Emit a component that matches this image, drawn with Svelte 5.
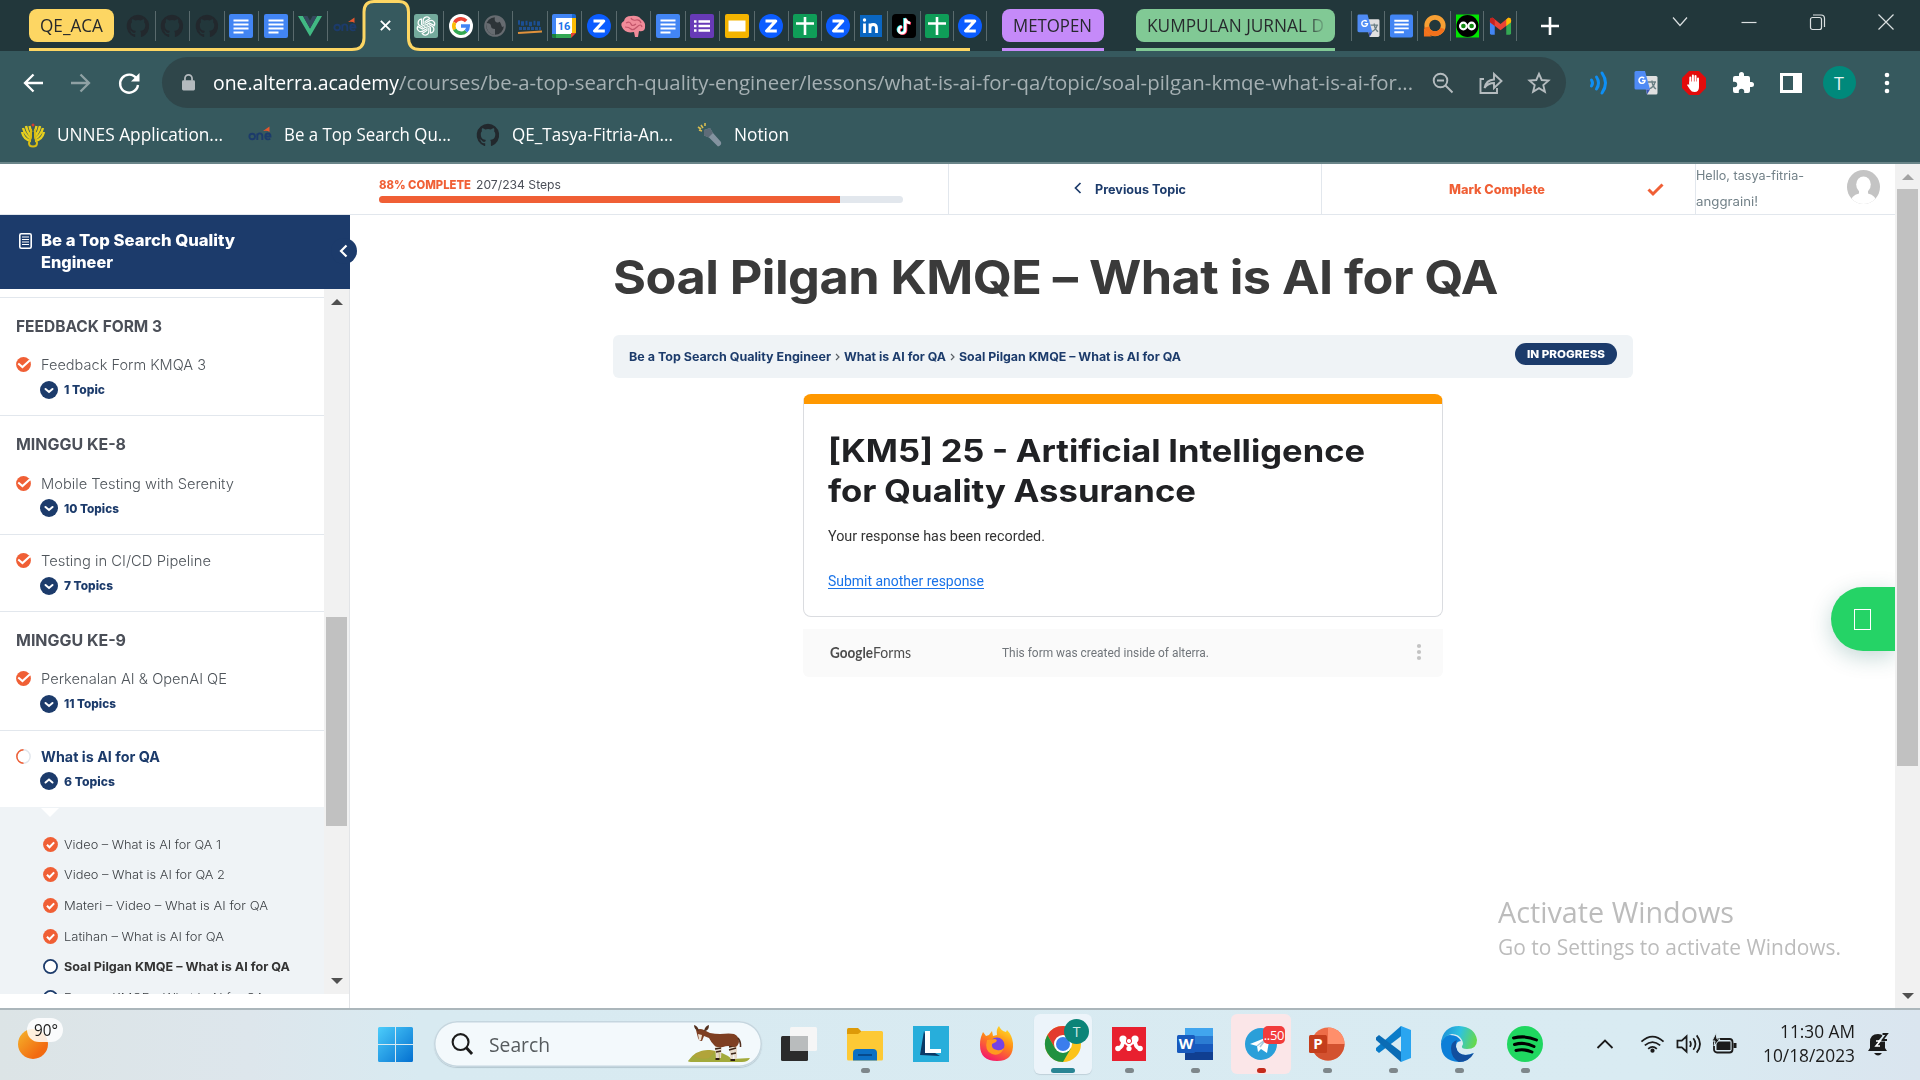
<script>
  // Scales a text run horizontally so that it takes exactly `w` pixels.
  function fit(el, w) {
    const natural = el.getBoundingClientRect().width;
    if (!natural) return;
    el.style.transform = `scaleX(${w / natural})`;
    el.style.marginRight = `${w - natural}px`;
  }

  const groupA = [
    ['github', 34.5], ['github', 34.5], ['github', 34.5], ['docs', 34.5], ['docs', 34.5], ['vue', 34.5], ['one', 34.5],
    ['active', 47],
    ['gpt', 34.5], ['google', 34.5], ['globe', 34.5], ['merdeka', 34.5], ['calendar', 34.5], ['zoom', 34.5], ['brain', 34.5],
    ['docs', 34.5], ['forms', 34.5], ['slides', 34.5], ['zoom', 34.5], ['sheets', 33], ['zoom', 33], ['linkedin', 33],
    ['tiktok', 33], ['sheets', 33], ['zoom', 33]
  ];
  const groupB = ['translate', 'docs', 'ring', 'infinity', 'gmail'];
  const extensions = ['waves', 'translate', 'hand', 'puzzle', 'panel', 'avatar', 'kebab'];
  const bookmarks = [
    { icon: 'unnes', text: 'UNNES Application...', w: 166 },
    { icon: 'one', text: 'Be a Top Search Qu...', w: 167 },
    { icon: 'github', text: 'QE_Tasya-Fitria-An...', w: 161 },
    { icon: 'torch', text: 'Notion', w: 55 }
  ];
  const sections = [
    { title: 'FEEDBACK FORM 3', w: 146, items: [{ name: 'Feedback Form KMQA 3', w: 165, topics: '1 Topic', tw: 41 }] },
    {
      title: 'MINGGU KE-8', w: 110,
      items: [
        { name: 'Mobile Testing with Serenity', w: 193, topics: '10 Topics', tw: 55 },
        { name: 'Testing in CI/CD Pipeline', w: 170, topics: '7 Topics', tw: 49 }
      ]
    },
    {
      title: 'MINGGU KE-9', w: 110,
      items: [
        { name: 'Perkenalan AI & OpenAI QE', w: 186, topics: '11 Topics', tw: 52 },
        { name: 'What is AI for QA', w: 119, topics: '6 Topics', tw: 51, open: true }
      ]
    }
  ];
  const lessons = [
    { name: 'Video – What is AI for QA 1', w: 157, done: true },
    { name: 'Video – What is AI for QA 2', w: 161, done: true },
    { name: 'Materi – Video – What is AI for QA', w: 204, done: true },
    { name: 'Latihan – What is AI for QA', w: 160, done: true },
    { name: 'Soal Pilgan KMQE – What is AI for QA', w: 226, current: true },
    { name: 'Essay – KMQE – What is AI for QA', w: 200 }
  ];
  const apps = ['taskview', 'explorer', 'lapp', 'firefox', 'chrome', 'mendeley', 'word', 'telegram', 'powerpoint', 'vscode', 'edge', 'spotify'];
  const running = ['explorer', 'mendeley', 'word', 'powerpoint', 'vscode', 'edge', 'spotify'];
</script>

{#snippet icon(name)}
  <svg class="ic" viewBox="0 0 24 24">
    {#if name === 'github'}
      <path fill="#22282d" d="M12 .8a11.4 11.4 0 0 0-3.6 22.2c.6.1.8-.3.8-.6v-2.200c-3.200.7-3.900-1.400-3.900-1.400-.5-1.300-1.300-1.700-1.300-1.700-1-.7.1-.7.1-.7 1.200.1 1.800 1.200 1.800 1.200 1 1.800 2.700 1.300 3.400 1 .1-.8.4-1.300.7-1.600-2.500-.3-5.200-1.300-5.200-5.700 0-1.200.4-2.300 1.200-3-.1-.3-.5-1.500.1-3.100 0 0 1-.3 3.100 1.200a10.700 10.700 0 0 1 5.700 0c2.200-1.500 3.100-1.200 3.100-1.200.6 1.600.2 2.800.1 3.100.7.8 1.200 1.800 1.200 3 0 4.400-2.700 5.400-5.200 5.700.4.3.8 1 .8 2.100v3.200c0 .3.200.7.8.6A11.400 11.400 0 0 0 12 .8z" />
    {:else if name === 'docs'}
      <rect width="24" height="24" rx="2" fill="#4285f4" />
      <path d="M4.500 6.500h15M4.500 10.500h15M4.500 14.500h15M4.500 18.500h10" stroke="#fff" stroke-width="2" />
    {:else if name === 'vue'}
      <path fill="#41b883" d="M0 2h5l7 12.500L19 2h5L12 22.500z" /><path fill="#35495e" d="M5 2h4.400L12 6.700 14.600 2H19l-7 12.500z" />
    {:else if name === 'one'}
      <g fill="none" stroke="#1c3b6b" stroke-width="1.900"><circle cx="4.200" cy="13.500" r="2.800" /><path d="M9.300 17v-6.500M9.300 13q0-2.600 2.500-2.600t2.500 2.600v4M17.500 13.500h5q0-3-2.600-3t-2.600 3 2.700 2.900q1.400 0 2.300-.8" /></g>
      <path d="M15 8l6.500-4.500V9q-2-2-6.500-1z" fill="#e4572e" />
    {:else if name === 'gpt'}
      <rect width="24" height="24" rx="2.500" fill="#74aa9c" />
      <g fill="none" stroke="#fff" stroke-width="1.200">
        {#each [0, 60, 120, 180, 240, 300] as a}<path transform="rotate({a} 12 12)" d="M9.200 10.300V6.600a3.600 3.600 0 0 1 6.600-2l-4.700 2.900v4" />{/each}
      </g>
    {:else if name === 'google'}
      <circle cx="12" cy="12" r="12" fill="#fff" />
      <g fill="none" stroke-width="3.600"><path d="M5.700 8.500A7.200 7.200 0 0 1 17.200 7" stroke="#ea4335" /><path d="M5.700 15.500a7.200 7.200 0 0 1 0-7" stroke="#fbbc05" /><path d="M17 17.200a7.200 7.200 0 0 1-11.300-1.700" stroke="#34a853" /><path d="M12 12h7.200a7.200 7.200 0 0 1-2.200 5.200" stroke="#4285f4" /></g>
    {:else if name === 'globe'}
      <circle cx="12" cy="12" r="9.800" fill="#2d3438" stroke="#666b70" stroke-width="2" /><path fill="#666b70" d="M3 9q5 0 5 3t4 3v6Q3 20 3 9zM12 2q-1 5 1 6t3 0 3 5l3-1Q21 3 12 2z" />
    {:else if name === 'merdeka'}
      <path d="M0 8.500h2M3 9.500h3M7.500 9h2M11 10h3M15.500 9h2M19 9.500h3" stroke="#1b4f93" stroke-width="4.500" /><path d="M1 14.500h22" stroke="#20508c" stroke-width="2.800" stroke-dasharray="3 1" /><path d="M0 19l24-1.500" stroke="#e0913c" stroke-width="2" />
    {:else if name === 'calendar'}
      <path fill="#4285f4" d="M2 0h18v4H4v20H2q-2 0-2-2V2q0-2 2-2z" /><path fill="#fff" d="M4 4h16v16H4z" /><path fill="#fbbc04" d="M20 4h4v15h-4z" /><path fill="#34a853" d="M4 20h15v4H4z" /><path fill="#188038" d="M0 20h4v4H2q-2 0-2-2z" /><path fill="#ea4335" d="M19 24v-5h5z" /><path fill="#1967d2" d="M20 0h2q2 0 2 2v2h-4z" />
      <text x="12" y="16" text-anchor="middle" font-size="11" font-weight="700" fill="#1a73e8" font-family="Roboto, sans-serif">16</text>
    {:else if name === 'zoom'}
      <circle cx="12" cy="12" r="12" fill="#0b5cff" /><path d="M6.500 7h10.300L7.500 17h10.300" fill="none" stroke="#fff" stroke-width="3" stroke-linejoin="round" />
    {:else if name === 'brain'}
      <path fill="#f08b99" d="M1 13q-2-4 2-6 1-5 7-5 7-1 10 3 5 3 4 9-1 4-6 3l-1 6h-3l-1-5q-9 2-12-5z" /><path d="M5 9q4-2 5 1t5 0M10 4q1 3 5 2t5 3M4 13q4 0 6 2t6-2 5 0" fill="none" stroke="#c2556a" stroke-width="1.200" />
    {:else if name === 'forms'}
      <rect width="24" height="24" rx="2" fill="#673ab7" /><path d="M8.500 7.500H20M8.500 12H20M8.500 16.500H20" stroke="#fff" stroke-width="2.300" /><path d="M4 7.500h2.500M4 12h2.500M4 16.500h2.500" stroke="#fff" stroke-width="2.300" />
    {:else if name === 'slides'}
      <rect width="24" height="24" rx="2" fill="#f4b400" /><path fill="#fff" d="M3.500 6.500h17v11h-17z" />
    {:else if name === 'sheets'}
      <rect width="24" height="24" rx="2" fill="#0f9d58" /><path d="M3 9.500h18M12 3v18" stroke="#fff" stroke-width="2.600" />
    {:else if name === 'linkedin'}
      <rect x="1" y="1" width="22" height="22" fill="#0a66c2" /><path d="M5.500 9.500V19M11 19V9.500M11 14q0-3.500 3.200-3.500T17.500 14v5" fill="none" stroke="#fff" stroke-width="2.800" /><circle cx="5.500" cy="6" r="1.700" fill="#fff" />
    {:else if name === 'tiktok'}
      <rect width="24" height="24" rx="4" fill="#000" />
      <g fill="none" stroke-width="2.600"><path d="M12.500 4v11.500a3.300 3.300 0 1 1-3.300-3.300M12.500 4q.5 4 5 4.500" stroke="#25f4ee" /><path d="M14 5v11.500a3.300 3.300 0 1 1-3.300-3.300M14 5q.5 4 5 4.500" stroke="#fe2c55" /><path d="M13.200 4.500V16a3.300 3.300 0 1 1-3.300-3.300M13.200 4.500q.5 4 5 4.500" stroke="#fff" /></g>
    {:else if name === 'translate'}
      <path fill="#e0e0e0" d="M9 5h13q1.500 0 1.500 1.500V22q0 1.500-1.500 1.500h-9z" /><path d="M14 11h8M18 9.500V11q1 5 4 7M21 11q-1 5-6 7" fill="none" stroke="#6a7f84" stroke-width="1.300" />
      <path fill="#4f8bf5" d="M2 0h9l5 18.500H2Q.5 18.500.5 17V1.500Q.5 0 2 0z" /><path fill="#3a55b5" d="M12 18.500h4l-3 5z" /><path d="M10.200 7.300A3 3 0 1 0 11 9.500H8" fill="none" stroke="#fff" stroke-width="1.500" />
    {:else if name === 'ring'}
      <path fill="#f2711c" d="M1 14v9h8z" /><circle cx="12.500" cy="11.500" r="8.600" fill="none" stroke="#f7a034" stroke-width="5" /><path d="M4 13A8.600 8.600 0 0 0 20.500 14.500" fill="none" stroke="#f2711c" stroke-width="5" />
    {:else if name === 'infinity'}
      <rect width="24" height="24" fill="#00e600" /><circle cx="12" cy="12" r="11.500" fill="#000" /><g fill="#128a12" stroke="#fff" stroke-width="2.200"><circle cx="7.700" cy="12" r="3.500" /><circle cx="16.300" cy="12" r="3.500" /></g>
    {:else if name === 'gmail'}
      <path fill="#4285f4" d="M1 6l5 4v11H2.500Q1 21 1 19.500z" /><path fill="#34a853" d="M23 6l-5 4v11h3.500q1.500 0 1.500-1.500z" /><path fill="#ea4335" d="M1 6q0-3 3-2.500L12 10l8-6.500Q23 3 23 6v2l-11 8.500L1 8z" /><path fill="#c5221f" d="M1 6q0-3 3-2.500l2 1.700V12L1 8z" /><path fill="#fbbc04" d="M23 6q0-3-3-2.500l-2 1.700V12l5-4z" />
    {:else if name === 'unnes'}
      <path fill="none" stroke="#e6cf1e" stroke-width="2.400" d="M10 18Q3 17 1 9M10 16Q4 12 2 5M10 13Q6 9 5 3M10.500 9Q9 6 8.500 3M14 18q7-1 9-9M14 16q6-4 8-11M14 13q4-4 5-10M13.500 9Q15 6 15.500 3" /><path fill="none" stroke="#d9bd15" stroke-width="2" d="M10 6v8l-2 6q0 3.500 4 3.500t4-3.500l-2-6V6" /><circle cx="12" cy="2" r="1.500" fill="#d63c2f" />
    {:else if name === 'torch'}
      <path fill="#8493a0" d="M6 7l6-2 3 5 8 9q1 3-3 4.500l-9-9-5-2z" /><path fill="#5e6c78" d="M6 7l6-2 3 5-4.500 4.500-4.500-2z" /><path d="M1 7l3 1M3 2l2 3M7 0v3M0 4l3 2" stroke="#d8bd50" stroke-width="1.600" />
    {:else if name === 'waves'}
      <path d="M5.500 9q2 3 0 6M10.500 6q4 6 0 12M16 2q7 10 0 20" fill="none" stroke="#0e8ff5" stroke-width="3" stroke-linecap="round" />
    {:else if name === 'hand'}
      <path fill="#e30b0b" d="M7 0h10l7 7v10l-7 7H7l-7-7V7z" /><path d="M8.300 13V6.500M10.900 11V4.500M13.500 11V5M16 12V7.500" stroke="#fff" stroke-width="2" stroke-linecap="round" /><path fill="#fff" d="M7.300 10.500H17V16q0 5-4.500 5-3 0-4.500-2.500L5 14q1-1.500 2.300 0z" />
    {:else if name === 'puzzle'}
      <path fill="#fff" d="M20.500 11H19V7a2 2 0 0 0-2-2h-4V3.500a2.500 2.500 0 0 0-5 0V5H4a2 2 0 0 0-2 2v3.800h1.500a2.700 2.700 0 0 1 0 5.400H2V20a2 2 0 0 0 2 2h3.800v-1.500a2.700 2.700 0 0 1 5.400 0V22H17a2 2 0 0 0 2-2v-4h1.500a2.500 2.500 0 0 0 0-5z" />
    {:else if name === 'panel'}
      <path fill="#fff" fill-rule="evenodd" d="M1 2h22v20H1zM4 5h10v14H4z" />
    {:else if name === 'kebab'}
      <g fill="#fff"><circle cx="12" cy="4" r="2.300" /><circle cx="12" cy="12" r="2.300" /><circle cx="12" cy="20" r="2.300" /></g>
    {/if}
  </svg>
{/snippet}

{#snippet check(r)}
  <svg class="check" viewBox="0 0 16 16"><circle cx="8" cy="8" r="7.900" fill="#f05f35" /><path d={r ? 'M4.200 8.300l2.700 2.600 5-5.200' : 'M2.400 7l4.500 3.700 8-7.200'} fill="none" stroke="#fff" stroke-width="2.200" /></svg>
{/snippet}

<div class="screen">
  <div class="tabs">
    <div class="grp yellow"><span class="t" use:fit={63}>QE_ACA</span></div>
    <div class="row a">
      {#each groupA as [name, w], i}
        {#if name === 'active'}
          <div class="tab live" style:width="{w}px"><svg width="13" height="13" viewBox="0 0 14 14"><path d="M2 2l10 10M12 2L2 12" stroke="#fff" stroke-width="2" /></svg></div>
        {:else}
          <div class="tab" class:nosep={i === 6} style:width="{w}px">{@render icon(name)}</div>
        {/if}
      {/each}
    </div>
    <div class="grp purple"><span class="t" use:fit={79}>METOPEN</span></div>
    <div class="grp green"><span class="t" use:fit={177}>KUMPULAN JURNAL D</span></div>
    <div class="row b">
      {#each groupB as name}<div class="tab" style:width="33px">{@render icon(name)}</div>{/each}
    </div>
    <svg class="plus" width="18" height="18" viewBox="0 0 18 18"><path d="M9 0v18M0 9h18" stroke="#fff" stroke-width="2.600" /></svg>
    <div class="win">
      <svg width="18" height="18" viewBox="0 0 18 18"><path d="M2 4.500l7 8 7-8" /></svg>
      <svg width="18" height="18" viewBox="0 0 18 18"><path d="M1.500 9.500h15" /></svg>
      <svg width="18" height="18" viewBox="0 0 18 18"><rect x="2.500" y="4.500" width="11" height="12" rx="2" /><path d="M5 2h8q3.500 0 3.500 3.500V14" /></svg>
      <svg width="18" height="18" viewBox="0 0 18 18"><path d="M1.500 1.500l15 15M16.500 1.500l-15 15" /></svg>
    </div>
    <svg class="outline" width="1360" height="51" viewBox="0 0 1360 51">
      <path d="M352 51Q364 50 364 38V12Q364 1.500 374 1.500H399Q408.500 1.500 408.500 12V38Q408.500 50 420 51z" fill="#36595e" />
      <path d="M29 49.500H352Q364 49.500 364 38V12Q364 1.500 374 1.500H399Q408.500 1.500 408.500 12V38Q408.500 49.500 420 49.500H970" fill="none" stroke="#fdd663" stroke-width="3" />
      <path d="M1002 49.500h102" stroke="#c58af9" stroke-width="3" /><path d="M1136 49.500h199" stroke="#81c995" stroke-width="3" />
    </svg>
  </div>

  <div class="toolbar">
    <div class="cell"><svg width="20" height="20" viewBox="0 0 20 20"><path d="M20 10H2M10.500 1.500L2 10l8.500 8.500" fill="none" stroke="#fff" stroke-width="2.300" /></svg></div>
    <div class="cell"><svg width="20" height="20" viewBox="0 0 20 20"><path d="M0 10h18M9.500 1.500L18 10l-8.500 8.500" fill="none" stroke="#8fa1a4" stroke-width="2.300" /></svg></div>
    <div class="cell"><svg width="22" height="22" viewBox="0 0 22 22"><path d="M18.500 6.500A9 9 0 1 0 20 13" fill="none" stroke="#fff" stroke-width="2.400" /><path d="M21.500 1v8.500H13z" fill="#fff" /></svg></div>
    <div class="omni">
      <svg class="lock" width="13" height="17" viewBox="0 0 14 18"><rect y="6.500" width="14" height="11" rx="1.500" fill="#b4babe" /><path d="M3.200 7V4.500a3.800 3.800 0 0 1 7.600 0V7" fill="none" stroke="#b4babe" stroke-width="1.900" /></svg>
      <div class="url"><span class="t" use:fit={186}>one.alterra.academy</span><span class="t path" use:fit={1014}>/courses/be-a-top-search-quality-engineer/lessons/what-is-ai-for-qa/topic/soal-pilgan-kmqe-what-is-ai-for...</span></div>
      <div class="cell"><svg width="22" height="22" viewBox="0 0 22 22" class="line"><circle cx="8.500" cy="8.500" r="6.800" /><path d="M13.500 13.500l7 7M5 8.500h7" /></svg></div>
      <div class="cell"><svg width="24" height="22" viewBox="0 0 24 22" class="line"><path d="M5 7H1.500v14H18v-5" /><path d="M5.500 16Q7 8 15 7.500V2l7.500 7-7.500 7v-5q-6 0-9.500 5z" /></svg></div>
      <div class="cell"><svg width="22" height="22" viewBox="0 0 22 22" class="line"><path d="M11 1.800l2.700 6.200 6.800.6-5.200 4.500 1.600 6.700L11 16.200l-5.900 3.600 1.600-6.700L1.500 8.600 8.300 8z" /></svg></div>
    </div>
    {#each extensions as e}
      <div class="cell ext">{#if e === 'avatar'}<span class="me">T</span>{:else}{@render icon(e)}{/if}</div>
    {/each}
  </div>

  <div class="marks">
    {#each bookmarks as b}
      {@render icon(b.icon)}<span class="label"><span class="t" use:fit={b.w}>{b.text}</span></span>
    {/each}
  </div>

  <div class="page">
    <div class="site">
      <div class="top">
        <div class="progress">
          <div class="ptext"><b class="t" use:fit={92}>88% COMPLETE</b><span class="t" use:fit={85}>207/234 Steps</span></div>
          <div class="bar"><i></i></div>
        </div>
        <div class="nav prev"><svg width="8" height="12" viewBox="0 0 8 12"><path d="M6.500 1L1.500 6l5 5" fill="none" stroke="#1c3b6b" stroke-width="1.700" /></svg><b class="t" use:fit={91}>Previous Topic</b></div>
        <div class="nav done"><b class="t" use:fit={96}>Mark Complete</b><svg width="17" height="13" viewBox="0 0 17 13"><path d="M1.500 6.500l4.500 4.500L15.500 1.500" fill="none" stroke="#f05f35" stroke-width="3" /></svg></div>
        <div class="hello"><div><span class="t" use:fit={108}>Hello, tasya-fitria-</span></div><div><span class="t" use:fit={62}>anggraini!</span></div></div>
        <svg class="face" width="33" height="34" viewBox="0 0 33 34"><clipPath id="disc"><ellipse cx="16.500" cy="17" rx="16.500" ry="17" /></clipPath><g clip-path="url(#disc)"><path fill="#c4c4c4" d="M0 0h33v34H0z" /><ellipse cx="16.500" cy="14.500" rx="7.300" ry="8" fill="#fff" /><path fill="#fff" d="M3 34q1-9 9-10.500V18h9v5.500Q29 25 30 34z" /></g></svg>
      </div>

      <div class="body">
        <aside>
          <div class="course">
            <svg width="13" height="16" viewBox="0 0 13 16"><rect x=".8" y=".8" width="11.400" height="14.400" rx="1.500" fill="none" stroke="#fff" stroke-width="1.600" /><path d="M3 4h7M3 6.500h7M3 9h7M3 11.500h7" stroke="#fff" stroke-width="1.100" /></svg>
            <h2><span class="t" use:fit={194}>Be a Top Search Quality</span><br /><span class="t" use:fit={72}>Engineer</span></h2>
            <span class="fold"><svg width="9" height="14" viewBox="0 0 9 14"><path d="M7.500 1.500L2 7l5.500 5.500" fill="none" stroke="#fff" stroke-width="2.200" /></svg></span>
          </div>
          <div class="side">
            <div class="list">
              <div class="lead"></div>
              {#each sections as s}
                <h3><span class="t" use:fit={s.w}>{s.title}</span></h3>
                {#each s.items as it}
                  <div class="item" class:open={it.open}>
                    <div class="name">
                      {#if it.open}
                        <svg class="check" viewBox="0 0 16 16"><g fill="none" stroke-width="1.600"><circle cx="8" cy="8" r="7.100" stroke="#e2e7ed" /><path d="M8 .9a7.100 7.100 0 0 0 0 14.200" stroke="#f05f35" /></g></svg>
                      {:else}{@render check(false)}{/if}
                      <span class="t" use:fit={it.w}>{it.name}</span>
                    </div>
                    <div class="topics">
                      <svg width="18" height="18" viewBox="0 0 18 18"><circle cx="9" cy="9" r="9" fill="#1c3b6b" /><path d={it.open ? 'M5.500 10.500L9 7.500l3.500 3' : 'M5.500 8L9 11l3.500-3'} fill="none" stroke="#fff" stroke-width="2" stroke-linecap="round" /></svg>
                      <b class="t" use:fit={it.tw}>{it.topics}</b>
                    </div>
                  </div>
                {/each}
              {/each}
              <div class="lessons">
                <svg class="notch" width="18" height="9" viewBox="0 0 18 9"><path d="M0 0h18L9 9z" fill="#fff" /></svg>
                {#each lessons as l}
                  <div class="lesson" class:current={l.current}>
                    {#if l.done}{@render check(true)}{:else}<svg class="check" viewBox="0 0 16 16"><circle cx="8" cy="8" r="7" fill="#fff" stroke="#1c3b6b" stroke-width="1.900" /></svg>{/if}
                    <span class="t" use:fit={l.w}>{l.name}</span>
                  </div>
                {/each}
              </div>
            </div>
            <div class="scroll inner"><i class="up"></i><div class="thumb"></div><i class="down"></i></div>
          </div>
        </aside>

        <main>
          <h1><span class="t" use:fit={885}>Soal Pilgan KMQE – What is AI for QA</span></h1>
          <div class="crumbs">
            <b class="t" use:fit={202}>Be a Top Search Quality Engineer</b><svg width="5" height="8" viewBox="0 0 5 8"><path d="M1 1l3 3-3 3" /></svg><b class="t" use:fit={102}>What is AI for QA</b><svg width="5" height="8" viewBox="0 0 5 8"><path d="M1 1l3 3-3 3" /></svg><b class="t" use:fit={222}>Soal Pilgan KMQE – What is AI for QA</b>
            <span class="badge"><span class="t" use:fit={78}>IN PROGRESS</span></span>
          </div>
          <div class="card">
            <h4><span class="t" use:fit={537}>[KM5] 25 - Artificial Intelligence</span><br /><span class="t" use:fit={368}>for Quality Assurance</span></h4>
            <p><span class="t" use:fit={217}>Your response has been recorded.</span></p>
            <p class="link"><span class="t" use:fit={156}>Submit another response</span></p>
          </div>
          <div class="foot">
            <span class="brand"><span class="t g" use:fit={43}>Google</span><span class="t" use:fit={38}>Forms</span></span>
            <span class="t" use:fit={207}>This form was created inside of alterra.</span>
            <svg width="6" height="18" viewBox="0 0 6 18"><g fill="#c3c3c3"><circle cx="3" cy="3" r="2.100" /><circle cx="3" cy="9" r="2.100" /><circle cx="3" cy="15" r="2.100" /></g></svg>
          </div>
        </main>
      </div>
      <div class="chat"><i></i></div>
      <div class="activate"><div class="l1"><span class="t" use:fit={236}>Activate Windows</span></div><div class="l2"><span class="t" use:fit={343}>Go to Settings to activate Windows.</span></div></div>
    </div>
    <div class="scroll outer"><i class="up"></i><div class="thumb"></div><i class="down"></i></div>
  </div>

  <div class="taskbar">
    <div class="weather"><i></i><span><span class="t" use:fit={24}>90°</span></span></div>
    <svg class="start" width="35" height="35" viewBox="0 0 35 35"><defs><linearGradient id="win" x1="0" y1="0" x2="1" y2="1"><stop offset="0" stop-color="#4ccdfb" /><stop offset="1" stop-color="#0470d0" /></linearGradient></defs><path fill="url(#win)" d="M1.500 0H17v17H0V1.500Q0 0 1.500 0zM18 0h15.500Q35 0 35 1.500V17H18zM0 18h17v17H1.500Q0 35 0 33.500zM18 18h17v15.500q0 1.500-1.500 1.500H18z" /></svg>
    <div class="search">
      <svg width="23" height="24" viewBox="0 0 24 24"><circle cx="10" cy="10" r="8.300" fill="none" stroke="#1b1b1b" stroke-width="2.200" /><path d="M16 16l6 6.500" stroke="#1b1b1b" stroke-width="3" /></svg>
      <span class="q"><span class="t" use:fit={61}>Search</span></span>
      <svg class="okapi" width="64" height="38" viewBox="0 0 64 38">
        <path fill="#a3aa3c" d="M0 36Q8 24 22 25q14 2 22 9l18-1q-2 4-8 4H5Q0 37 0 36z" /><path fill="#c09d38" opacity=".5" d="M5 31q9-8 22-5l-6 7q-8 2-16-2z" />
        <path fill="#e6d8c8" d="M27 20h3.500l.5 14h-3zM31 20h3l-1 13h-1.500zM41 18h5l-1 16h-2.500zM45 18h4v16h-2.500z" /><path fill="#7e3f22" d="M40 13h9l-1 8-7-1z" /><path d="M27 24l6-1M28 27l5-1M41 22l8-2M41 25l7-2M43 29l5-1" stroke="#3c2415" stroke-width="1.400" /><path d="M27.500 34h4M42.500 35h4.500" stroke="#2c1a10" stroke-width="2" />
        <path fill="#7e3f22" d="M8 5q4-2 8 0l6 3q5 1 10 1 10-1 14 0 5 2 5 8-1 5-5 5-6-2-11 0-7 1-9-2-3-3-5-7l-5-2-2 5q-3 0-4-3z" /><path fill="#54301e" d="M6 0q4 1 5 6-5-1-5-6zM21 0q-4 1-5 6 5 0 5-6z" /><path fill="#efe3d4" d="M10 9l4 1-1 5h-2z" /><path d="M50 13q3 4 2.500 9" fill="none" stroke="#54301e" stroke-width="1.600" />
      </svg>
    </div>
    <div class="apps">
      {#each apps as a}
        <div class="app {a}">
          <svg width="36" height="36" viewBox="0 0 36 36">
            {#if a === 'taskview'}
              <rect y="10" width="27" height="25" rx="1.500" fill="#2b2b2b" /><rect x="9" y="1" width="27" height="24" rx="1.500" fill="#f6f6f6" /><path fill="#b9bcbd" d="M9 10h18v15H9z" />
            {:else if a === 'explorer'}
              <path fill="#dd9a08" d="M0 3.500Q0 2 1.500 2H11l4 4v4H0z" /><path fill="#fdc935" d="M0 8h11l4-3h19.500Q36 5 36 6.500V33q0 1.500-1.500 1.500h-33Q0 34.500 0 33z" /><path fill="#0c70c4" d="M6 34.500V27q0-4 4-4h16q4 0 4 4v7.500z" /><path d="M11 29h14" stroke="#064a8c" stroke-width="2" />
            {:else if a === 'lapp'}
              <path fill="#27aedb" d="M0 0h36v36H0z" /><path fill="#0b3a66" d="M11 5l-4 24 20 1-10-6z" /><path fill="#fff" d="M12 5h5v18h11v4H12z" />
            {:else if a === 'firefox'}
              <defs><linearGradient id="fx" x1=".8" y1="0" x2=".3" y2="1"><stop offset="0" stop-color="#ffe226" /><stop offset=".45" stop-color="#ff8a16" /><stop offset="1" stop-color="#f5156c" /></linearGradient></defs>
              <path fill="url(#fx)" d="M2 11l2-5 3 4 3-1 3-4 1 5 4-1q-1-6 2-9 2 5 7 6l1-2q5 5 6 13 1 18-16 18T1 19q0-5 1-8z" /><circle cx="18" cy="19" r="7.500" fill="#7543e5" /><path fill="#ff9a1f" d="M8 14l8-1q3 1 1 3l-4 2q-1 5 5 6 4 1 7-2-4 9-12 6T8 14z" />
            {:else if a === 'chrome'}
              <circle cx="18" cy="18" r="18" fill="#fcc31a" /><path fill="#e33b2e" d="M2.400 9A18 18 0 0 1 33.600 9H18l-7.800 13.500z" /><path fill="#20913f" d="M2.400 9A18 18 0 0 0 18 36l7.800-13.500H10.200z" /><circle cx="18" cy="18" r="9" fill="#fff" /><circle cx="18" cy="18" r="7" fill="#3b7ded" />
            {:else if a === 'mendeley'}
              <path fill="#e8202f" d="M1 1h34v34H1z" /><g fill="#fff"><circle cx="12" cy="13" r="3.600" /><circle cx="24" cy="13" r="3.600" /><circle cx="7" cy="22.500" r="2.800" /><circle cx="29" cy="22.500" r="2.800" /><circle cx="18" cy="22.500" r="2.600" /></g><path d="M8 22q4-1 4-8l6 5 6-5q0 7 4 8" fill="none" stroke="#fff" stroke-width="3.800" /><circle cx="18" cy="15" r="2.600" fill="#fff" stroke="#e8202f" />
            {:else if a === 'word'}
              <path fill="#41a5ee" d="M8 2h28v9H8z" /><path fill="#2b7cd3" d="M8 10h28v8H8z" /><path fill="#185abd" d="M8 18h28v8H8z" /><path fill="#103f91" d="M8 26h28v8H8z" /><rect y="9" width="18" height="18" rx="1.500" fill="#185abd" /><text x="9" y="23" class="glyph">W</text>
            {:else if a === 'telegram'}
              <circle cx="18" cy="18" r="16" fill="#2a9fd9" /><path fill="#fff" d="M7 18l20-8-3 17-6-4-3 3-1-6z" /><path d="M14 20l9-7-6 8" fill="none" stroke="#a9c9dd" stroke-width="1.500" />
            {:else if a === 'powerpoint'}
              <circle cx="19" cy="18" r="16.500" fill="#ed6c47" /><path fill="#ff8f6b" d="M19 1.500A16.500 16.500 0 0 1 35.500 18H19z" /><path fill="#d35230" d="M2.500 18h33a16.500 16.500 0 0 1-33 0z" /><rect y="9" width="18" height="18" rx="1.500" fill="#c43e1c" /><text x="9" y="23" class="glyph">P</text>
            {:else if a === 'vscode'}
              <path fill="#0a7cc9" d="M26 0l3 8L4 27l-3-2.500V22z" /><path fill="#0a6cb5" d="M26 36l3-8L4 9l-3 2.500V14z" /><path fill="#2aa5f0" d="M26 0l10 4v28l-10 4z" />
            {:else if a === 'edge'}
              <defs><linearGradient id="eg" x1="0" y1=".3" x2="1" y2=".5"><stop offset="0" stop-color="#1b8fd8" /><stop offset=".5" stop-color="#2fc2df" /><stop offset="1" stop-color="#66d94c" /></linearGradient></defs>
              <path fill="#0c7fd8" d="M0 18q0-9 9-9 8 0 11 6-5 0-5 6 1 8 9 8 5 0 8-2-5 9-14 9Q0 35 0 18z" /><path fill="#124f9e" d="M10 22q0-6 6-8-2 3-1 7 2 8 10 8 4 0 8-2-5 9-15 9-8-4-8-14z" /><path fill="url(#eg)" d="M0 17Q2 0 18 0q16 1 18 14 0 9-10 9-6 0-5-3 2-2 0-6-3-6-10-6Q4 9 0 17z" />
            {:else}
              <circle cx="18" cy="18" r="18" fill="#1fd760" /><path d="M6.500 12q12-3 23 2M7.500 18.500q10-3 19.500 2M9 24.500q8-2 16 1.500" fill="none" stroke="#000" stroke-width="3" stroke-linecap="round" />
            {/if}
          </svg>
          {#if a === 'chrome'}<span class="cb">T</span>{/if}
          {#if a === 'telegram'}<span class="tb">..50</span>{/if}
          {#if a === 'chrome' || a === 'telegram' || running.includes(a)}<u></u>{/if}
        </div>
      {/each}
    </div>
    <div class="tray">
      <svg width="18" height="12" viewBox="0 0 18 12"><path d="M1.500 10L9 2.500l7.500 7.500" /></svg>
      <svg class="wifi" width="25" height="20" viewBox="0 0 26 20"><path d="M1.500 7.500Q13-3 24.500 7.500M5 11.500q8-7 16 0M8.500 15q4.500-4 9 0" /><circle cx="13" cy="17" r="2.200" fill="#1b1b1b" stroke="none" /></svg>
      <svg class="vol" width="25" height="22" viewBox="0 0 26 22"><path d="M1.500 7.500v7H6l5 4.500V3L6 7.500zM14.500 8q2 3 0 6M18 5q4.500 6 0 12M21.500 2q7 9 0 18" /></svg>
      <svg class="bat" width="25" height="20" viewBox="0 0 25 20"><rect x="2" y="5" width="18.500" height="13.500" rx="3" /><path d="M23 9v5" stroke-width="3" /><path fill="#1b1b1b" stroke="none" d="M4.500 7.500h14v8.500h-14z" /><path fill="#1b1b1b" stroke="#d9eaf1" stroke-width="1" d="M4-1L0 7h3l-1 5 6-7H5z" /></svg>
      <div class="clock"><div><span class="t" use:fit={75}>11:30 AM</span></div><div><span class="t" use:fit={92}>10/18/2023</span></div></div>
      <svg class="bell" width="21" height="24" viewBox="0 0 21 24"><path fill="#1b1b1b" stroke="none" d="M2 10q0-8 8-8 7 0 7 8v6l2 3H0l2-3zM6 21h8q-4 5-8 0z" /><path stroke-width="4" stroke="#d9eaf1" d="M14 1.500h5l-5 6h5" /><path stroke-width="1.800" d="M14.500 2H19l-4.500 6H19" /><path d="M8 9h4l-4 5h4" stroke="#fff" stroke-width="1.600" /></svg>
    </div>
  </div>
</div>

<style>
  :global(body) { margin: 0; overflow: hidden; }
  .screen { width: 1920px; height: 1080px; display: flex; flex-direction: column; overflow: hidden; background: #fff; font-family: 'Open Sans', 'Noto Sans', sans-serif; color: #fff; }
  svg { display: block; flex: none; overflow: visible; }
  .t { display: inline-block; white-space: pre; transform-origin: 0 50%; flex: none; }
  .ic { width: 24px; height: 24px; }
  h1, h2, h3, h4, p { margin: 0; }

  .tabs { position: relative; height: 51px; background: #22373b; display: flex; align-items: center; flex: none; }
  .grp { height: 33px; border-radius: 8px; display: flex; align-items: center; box-sizing: border-box; padding: 0 0 1px 10.500px; font-size: 18px; color: #26292c; z-index: 1; flex: none; }
  .yellow { width: 85px; margin-left: 29px; background: #fdd663; }
  .purple { width: 102px; margin-left: 15px; background: #c58af9; }
  .green { width: 199px; margin-left: 32px; background: #81c995; }
  .green .t { background: linear-gradient(90deg, #26292c 91%, #81c995 102%); -webkit-background-clip: text; background-clip: text; color: transparent; }
  .row { display: flex; align-items: center; z-index: 1; flex: none; }
  .a { margin-left: 7px; }
  .b { margin-left: 16px; border-left: 1px solid #596a6d; }
  .tab { height: 30px; box-sizing: border-box; border-right: 1px solid #596a6d; display: flex; align-items: center; justify-content: center; flex: none; }
  .nosep, .live { border-right: 0; }
  .live { height: 51px; }
  .live svg { margin-right: 2px; }
  .b .ic { width: 23px; }
  .plus { margin-left: 24px; z-index: 1; }
  .win { display: flex; gap: 50.500px; margin-left: 112px; margin-bottom: 8px; fill: none; stroke: #dbe0e1; stroke-width: 1.200; }
  .outline { position: absolute; left: 0; top: 0; z-index: 0; }

  .toolbar { height: 63px; background: #36595e; display: flex; align-items: center; padding-left: 9px; flex: none; }
  .cell { width: 48px; height: 48px; display: flex; align-items: center; justify-content: center; flex: none; }
  .ext { width: 48.200px; }
  .omni { width: 1404px; height: 51px; margin: 0 8px 0 9px; border-radius: 26px; background: #2f464a; display: flex; align-items: center; flex: none; }
  .lock { margin-left: 20px; }
  .url { margin: 0 0 2px 18px; font-size: 20.500px; line-height: 28px; width: 1206px; white-space: nowrap; flex: none; }
  .path { color: #a5b0b3; }
  .line { fill: none; stroke: #b5bcbf; stroke-width: 1.900; }
  .me { width: 33px; height: 33px; border-radius: 50%; background: #00897b; display: grid; place-items: center; font: 18px 'Open Sans', sans-serif; color: #e6f2f1; }
  .marks { height: 48px; box-sizing: border-box; background: #36595e; display: flex; align-items: center; padding: 0 0 6px 21px; flex: none; font-size: 18px; }
  .label { margin: 0 25px 2px 12px; flex: none; }

  .page { height: 844px; border-top: 2px solid #6a8589; border-bottom: 2px solid #abb6bb; display: flex; flex: none; margin-bottom: -2px; position: relative; z-index: 1; color: #444; font-family: Inter, sans-serif; }
  .site { width: 1895px; position: relative; display: flex; flex-direction: column; flex: none; }
  .top { height: 50px; border-bottom: 1px solid #e2e7ed; display: flex; flex: none; }
  .progress { width: 524px; margin-left: 379px; padding-top: 13px; font-size: 12px; }
  .ptext { height: 16px; line-height: 16px; display: flex; gap: 5px; color: #4b4f58; }
  .ptext b, .done b { color: #f05f35; font-weight: 800; }
  .bar { height: 7px; margin-top: 3px; border-radius: 4px; background: #e2e7ed; overflow: hidden; }
  .bar i { display: block; width: 461px; height: 7px; background: #f05f35; }
  .nav { width: 372px; border-left: 1px solid #e2e7ed; display: flex; align-items: center; font-size: 12.500px; flex: none; }
  .prev { margin-left: 45px; color: #1c3b6b; }
  .prev svg { margin: 0 13px 2px 125px; }
  .done { width: 373px; }
  .done b { margin-left: 127px; }
  .done svg { margin-left: 102px; }
  .hello { width: 151px; border-left: 1px solid #e2e7ed; font-size: 12.500px; line-height: 26px; color: #728188; height: 50px; flex: none; }
  .hello div { margin-top: -1px; }
  .hello div + div { margin-top: 0; }
  .face { margin-top: 6px; }

  .body { display: flex; flex: 1; min-height: 0; }
  aside { width: 349px; border-right: 1px solid #e2e4e7; display: flex; flex-direction: column; flex: none; }
  .course { height: 74px; width: 350px; background: #1c3b6b; position: relative; display: flex; z-index: 1; flex: none; }
  .course > svg { margin: 18px 9px 0 19px; }
  .course h2 { margin-top: 14px; font-size: 16px; line-height: 22px; font-weight: 800; color: #fff; }
  .fold { position: absolute; right: -7px; top: 23px; width: 26px; height: 26px; border-radius: 50%; background: #1c3b6b; }
  .fold svg { margin: 6px 0 0 8px; }
  .side { height: 705px; display: flex; flex: none; }
  .list { width: 324px; overflow: hidden; flex: none; }
  .lead { height: 8px; border-bottom: 1px solid #e2e7ed; }
  h3 { height: 41px; padding: 17px 0 0 16px; box-sizing: border-box; font-size: 16px; line-height: 22px; font-weight: 700; color: #4b4f58; }
  .item { height: 76.400px; border-bottom: 1px solid #e2e7ed; padding-left: 16px; }
  .check { width: 15px; height: 15px; }
  .name { padding-top: 15.300px; height: 21px; display: flex; align-items: center; gap: 9.500px; font-size: 14.500px; font-weight: 300; color: #4f555b; }
  .open .name { font-weight: 700; color: #1c3b6b; }
  .item.open { border-bottom-color: #eff3f6; height: 76px; }
  .topics { display: flex; align-items: center; height: 18px; margin: 5.500px 0 0 24px; gap: 6px; font-size: 12.200px; color: #1c3b6b; }
  .topics b { font-weight: 800; }
  .lessons { background: #eff3f6; height: 200px; padding: 21.500px 0 0 43px; position: relative; }
  .notch { position: absolute; left: 41px; top: 0; }
  .lesson { height: 30.600px; display: flex; align-items: center; gap: 6px; font-size: 12.200px; font-weight: 300; color: #3a3e42; }
  .current { font-weight: 700; color: #333; }

  .scroll { background: #f1f1f1; display: flex; flex-direction: column; align-items: center; flex: none; }
  .scroll i { width: 0; height: 0; border: 6px solid transparent; flex: none; }
  .thumb { background: #c1c1c1; flex: none; }
  .inner { width: 25px; height: 705px; }
  .inner .up { border-bottom-color: #505050; border-top: 0; margin-top: 10px; }
  .inner .thumb { width: 21px; height: 209px; margin-top: 312px; }
  .inner .down { border-top-color: #505050; border-bottom: 0; margin-top: 152px; }
  .outer { width: 25px; }
  .outer .up { border-bottom-color: #a3a3a3; border-top: 0; margin-top: 10px; }
  .outer .thumb { width: 21px; height: 577px; margin-top: 9px; }
  .outer .down { border-top-color: #505050; border-bottom: 0; margin-top: 227px; }

  main { padding-left: 263px; width: 1020px; }
  h1 { margin-top: 32px; height: 60px; font-size: 47px; line-height: 60px; font-weight: 750; letter-spacing: -.5px; color: #3a3a3a; white-space: nowrap; }
  .crumbs { margin-top: 28px; height: 43px; border-radius: 6px; background: #eff3f6; display: flex; align-items: center; padding-left: 16px; box-sizing: border-box; font-size: 11.800px; color: #1c3b6b; }
  .crumbs svg { margin: 0 3.800px 0 4.200px; fill: none; stroke: #5a6066; stroke-width: 1.200; }
  .badge { margin-left: auto; margin-right: 16px; margin-bottom: 5px; width: 102px; height: 22px; border-radius: 11px; background: #1c3b6b; color: #fff; font-size: 11px; font-weight: 800; line-height: 22px; padding-left: 12px; box-sizing: border-box; }
  .card { width: 640px; height: 223px; margin: 16px 0 0 190px; box-sizing: border-box; border: 1px solid #dadce0; border-top: 10px solid #ff9800; border-radius: 8px; padding: 27px 0 0 24px; background: #fff; }
  h4 { font-size: 31px; line-height: 40px; font-weight: 750; word-spacing: -.5px; color: #202124; }
  .card p { margin-top: 15px; height: 20px; font: 15px/20px Roboto, sans-serif; color: #333; }
  .card .link { margin-top: 25px; color: #1a73e8; }
  .link .t { text-decoration: underline; text-underline-offset: 2px; }
  .foot { width: 640px; height: 48px; margin: 12px 0 0 190px; background: #fafafa; border-radius: 0 0 6px 6px; display: flex; align-items: center; font: 12.500px Roboto, sans-serif; color: #70757a; }
  .foot .t { padding-bottom: 2px; }
  .brand { width: 172px; margin-left: 27px; font: 14.500px Lato, sans-serif; color: #4d4d4d; white-space: nowrap; }
  .g { font-weight: 700; }
  .foot svg { margin: 0 0 2px 207px; }
  .chat { position: absolute; right: 0; top: 423px; width: 64px; height: 64px; border-radius: 32px 0 0 32px; background: #25d366; box-shadow: 0 6px 22px rgba(7, 94, 84, .24); clip-path: inset(-40px 0 -50px -50px); }
  .chat i { display: block; width: 15px; height: 19px; border: 1px solid #fff; margin: 22px 0 0 23px; }
  .activate { position: absolute; left: 1498px; top: 728px; font-family: 'Open Sans', sans-serif; color: #bcbcbc; white-space: nowrap; }
  .l1 { font-size: 29px; line-height: 40px; }
  .l2 { font-size: 22px; line-height: 28px; }

  .taskbar { height: 72px; background: linear-gradient(90deg, #dce4e6 0, #dde6ec 250px, #d8eaf1 420px, #d9ebf2 1650px, #dae5ef 1920px); display: flex; align-items: center; flex: none; color: #1b1b1b; position: relative; }
  .weather { width: 378px; height: 72px; position: relative; flex: none; }
  .weather i { position: absolute; left: 18px; top: 21px; width: 30px; height: 30px; border-radius: 50%; background: linear-gradient(135deg, #f5b62c, #f26a10 75%); }
  .weather > span { position: absolute; left: 27px; top: 10px; width: 36px; height: 24px; border-radius: 12px; background: rgba(255, 255, 255, .85); box-sizing: border-box; padding-left: 7px; line-height: 24px; font-size: 16px; }
  .search { width: 328px; height: 46px; margin-left: 21px; border-radius: 23px; background: #f3f9fc; box-shadow: inset 0 0 0 1.500px #c5d6df, 0 1px 1px #b4c7d0; display: flex; align-items: center; flex: none; }
  .search > svg:first-child { margin-left: 17px; }
  .q { margin-left: 15px; width: 61px; font-size: 19.500px; color: #565b5e; }
  .okapi { margin-left: 138px; }
  .apps { display: flex; margin-left: 4px; flex: none; }
  .app { width: 66px; height: 60px; position: relative; display: grid; place-items: center; }
  .app u { position: absolute; left: 28.500px; bottom: 1px; width: 9px; height: 5px; border-radius: 3px; background: #7e878b; }
  .chrome { width: 58px; margin: 0 4px; border-radius: 6px; background: #ecf4fa; box-shadow: 0 1px 1px #bfd0d9; }
  .app.chrome u { left: 17px; width: 24px; background: #2a8594; }
  .telegram { width: 60px; margin: 0 3px; border-radius: 6px; background: #fbe6e8; }
  .app.telegram u { left: 25.500px; background: #c42b1c; }
  .cb { position: absolute; left: 30px; top: 5px; width: 25px; height: 25px; border-radius: 50%; background: #0b8478; color: #cfe9e5; display: grid; place-items: center; font-size: 14px; }
  .tb { position: absolute; left: 32px; top: 12px; width: 22px; height: 18px; border-radius: 5px; background: #f23c3c; color: #fff; display: grid; place-items: center; font-size: 13px; line-height: 18px; letter-spacing: -.3px; }
  .glyph { font: 700 15px 'Open Sans', sans-serif; text-anchor: middle; fill: #fff; }
  .tray { position: absolute; left: 1596px; top: 0; height: 72px; display: flex; align-items: center; }
  .tray svg { fill: none; stroke: #1b1b1b; stroke-width: 1.800; }
  .wifi { margin-left: 26px; }
  .vol { margin-left: 11px; }
  .bat { margin-left: 11px; }
  .clock { margin-left: 17px; width: 101px; margin-bottom: 2px; font-size: 17.500px; line-height: 24px; display: flex; flex-direction: column; align-items: flex-end; white-space: nowrap; }
  .clock > div { display: flex; }
  .bell { margin-left: 13px; }
</style>
